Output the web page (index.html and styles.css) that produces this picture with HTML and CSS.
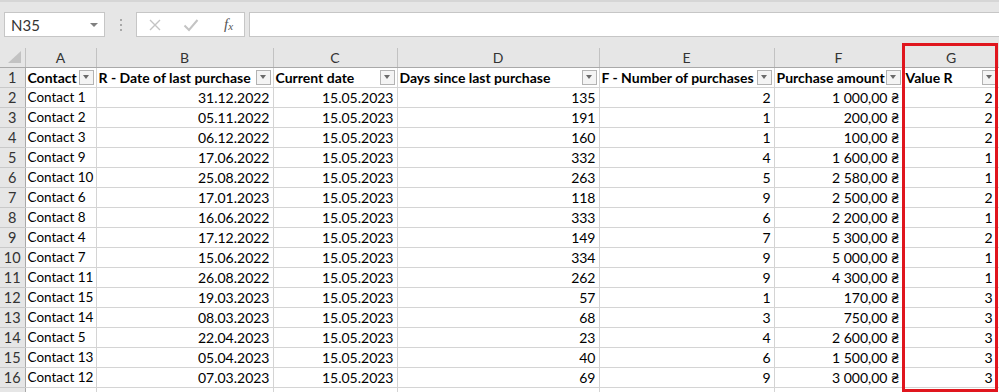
FILE: index.html
```html
<!DOCTYPE html>
<html lang="en">
<head>
    <meta charset="UTF-8">
    <title>RFM - Value R</title>
    <link rel="stylesheet" href="styles.css">
</head>
<body>
    <div class="formula-bar">
        <div class="name-box">
            <span>N35</span>
            <span class="caret"></span>
        </div>
        <div class="grip"><i></i><i></i><i></i></div>
        <div class="fx-buttons">
            <svg class="btn-icon" width="14" height="14" viewBox="0 0 14 14">
                <path d="M2 2 L12 12 M12 2 L2 12" stroke="#c4c4c4" stroke-width="1.4" fill="none"/>
            </svg>
            <svg class="btn-icon" width="16" height="14" viewBox="0 0 16 14">
                <path d="M1.5 7.5 L6 12 L14.5 2" stroke="#c4c4c4" stroke-width="2" fill="none"/>
            </svg>
            <span class="fx">f<sub>x</sub></span>
        </div>
        <div class="formula-input"></div>
    </div>

    <div class="sheet">
        <table class="grid">
            <colgroup>
                <col style="width:25px">
                <col style="width:71px">
                <col style="width:177px">
                <col style="width:124px">
                <col style="width:202px">
                <col style="width:175px">
                <col style="width:129px">
                <col style="width:96px">
            </colgroup>
            <thead>
                <tr class="col-heads">
                    <th class="corner"><span class="select-all"></span></th>
                    <th>A</th><th>B</th><th>C</th><th>D</th><th>E</th><th>F</th><th>G</th>
                </tr>
            </thead>
            <tbody id="rows">
                <tr>
                    <th class="row-head">1</th>
                    <td class="title"><div class="hdr"><span>Contact</span><i class="filter"></i></div></td>
                    <td class="title"><div class="hdr"><span>R - Date of last purchase</span><i class="filter"></i></div></td>
                    <td class="title"><div class="hdr"><span>Current date</span><i class="filter"></i></div></td>
                    <td class="title"><div class="hdr"><span>Days since last purchase</span><i class="filter"></i></div></td>
                    <td class="title"><div class="hdr"><span>F - Number of purchases</span><i class="filter"></i></div></td>
                    <td class="title"><div class="hdr"><span>Purchase amount</span><i class="filter"></i></div></td>
                    <td class="title last"><div class="hdr"><span>Value R</span><i class="filter"></i></div></td>
                </tr>
            </tbody>
        </table>
        <div class="highlight"></div>
    </div>

    <script>
        // Données du tableau : contact, date d'achat, jours, nombre, montant, valeur R
        const data = [
            ['Contact 1', '31.12.2022', 135, 2, '1 000,00', 2],
            ['Contact 2', '05.11.2022', 191, 1, '200,00', 2],
            ['Contact 3', '06.12.2022', 160, 1, '100,00', 2],
            ['Contact 9', '17.06.2022', 332, 4, '1 600,00', 1],
            ['Contact 10', '25.08.2022', 263, 5, '2 580,00', 1],
            ['Contact 6', '17.01.2023', 118, 9, '2 500,00', 2],
            ['Contact 8', '16.06.2022', 333, 6, '2 200,00', 1],
            ['Contact 4', '17.12.2022', 149, 7, '5 300,00', 2],
            ['Contact 7', '15.06.2022', 334, 9, '5 000,00', 1],
            ['Contact 11', '26.08.2022', 262, 9, '4 300,00', 1],
            ['Contact 15', '19.03.2023', 57, 1, '170,00', 3],
            ['Contact 14', '08.03.2023', 68, 3, '750,00', 3],
            ['Contact 5', '22.04.2023', 23, 4, '2 600,00', 3],
            ['Contact 13', '05.04.2023', 40, 6, '1 500,00', 3],
            ['Contact 12', '07.03.2023', 69, 9, '3 000,00', 3]
        ];

        const tbody = document.getElementById('rows');

        data.forEach((row, i) => {
            const tr = document.createElement('tr');
            tr.innerHTML = `
                <th class="row-head">${i + 2}</th>
                <td class="name">${row[0]}</td>
                <td class="num">${row[1]}</td>
                <td class="num">15.05.2023</td>
                <td class="num">${row[2]}</td>
                <td class="num">${row[3]}</td>
                <td class="num">${row[4].replace(' ', '&nbsp;')}&nbsp;₴</td>
                <td class="num last">${row[5]}</td>
            `;
            tbody.appendChild(tr);
        });

        // Ligne suivante vide, coupée en bas de l'écran
        const next = document.createElement('tr');
        next.innerHTML = '<th class="row-head"></th>' + '<td></td>'.repeat(7);
        tbody.appendChild(next);
    </script>
</body>
</html>
```

FILE: styles.css
```css
body {
    margin: 0;
    padding: 0;
    background-color: #e6e6e6;
    font-family: 'Lato', 'DejaVu Sans', sans-serif;
    color: #000;
    overflow: hidden;
}
.formula-bar {
    display: flex;
    align-items: center;
    height: 48px;
    padding-bottom: 11px;
    box-sizing: border-box;
    border-top: 2px solid #d6d6d6;
    padding-top: 10px;
}
.name-box {
    width: 101px;
    height: 25px;
    margin-left: 4px;
    box-sizing: border-box;
    background-color: white;
    border: 1px solid #c6c6c6;
    display: flex;
    align-items: center;
    justify-content: space-between;
    padding: 0 6px 0 6px;
    font-size: 15px;
    color: #333;
}
.caret {
    width: 0;
    height: 0;
    border-left: 4px solid transparent;
    border-right: 4px solid transparent;
    border-top: 4px solid #808080;
}
.grip {
    width: 31px;
    display: flex;
    flex-direction: column;
    align-items: center;
    gap: 3px;
}
.grip i {
    width: 2px;
    height: 2px;
    background-color: #a8a8a8;
}
.fx-buttons {
    width: 109px;
    height: 25px;
    box-sizing: border-box;
    background-color: white;
    border: 1px solid #c6c6c6;
    display: flex;
    align-items: center;
    padding-left: 11px;
    gap: 21px;
}
.fx {
    font-family: 'Liberation Serif', serif;
    font-style: italic;
    font-size: 15px;
    color: #555;
    margin-left: 4px;
}
.fx sub {
    font-size: 11px;
    vertical-align: -1px;
}
.formula-input {
    flex: 1;
    height: 25px;
    margin-left: 4px;
    box-sizing: border-box;
    background-color: white;
    border: 1px solid #c6c6c6;
    border-right: none;
}
.sheet {
    position: relative;
}
.grid {
    border-collapse: collapse;
    table-layout: fixed;
    width: 999px;
    background-color: white;
    font-size: 14px;
}
.grid th, .grid td {
    height: 20px;
    padding: 0 3px;
    border: 1px solid #d4d4d4;
    border-top: none;
    border-left: none;
    white-space: nowrap;
    overflow: hidden;
    box-sizing: border-box;
}
.grid td.name {
    padding-left: 2px;
    padding-right: 0;
    font-size: 13.5px;
}
.col-heads th {
    height: 19px;
    background-color: #e6e6e6;
    font-weight: normal;
    color: #333;
    font-size: 14px;
    border-right: 1px solid #c2c2c2;
    border-bottom: 1px solid #a9a9a9;
}
.select-all {
    display: block;
    margin-left: 5px;
    width: 0;
    height: 0;
    border-left: 13px solid transparent;
    border-bottom: 12px solid #c2c2c2;
}
.row-head {
    background-color: #e6e6e6;
    font-weight: normal;
    color: #333;
    font-size: 14.5px;
    text-align: center;
    border-right: 1px solid #a9a9a9 !important;
    border-bottom: 1px solid #c9c9c9 !important;
}
.grid td.num {
    text-align: right;
}
.grid td.last {
    padding-right: 6px;
}
.title {
    font-weight: bold;
    padding-left: 2px !important;
    padding-right: 2px !important;
}
.hdr {
    display: flex;
    align-items: center;
    justify-content: space-between;
}
.filter {
    width: 15px;
    height: 15px;
    flex-shrink: 0;
    box-sizing: border-box;
    border: 1px solid #b3b3b3;
    background-color: #f4f4f4;
    display: flex;
    align-items: center;
    justify-content: center;
}
.filter::after {
    content: '';
    border-left: 3.5px solid transparent;
    border-right: 3.5px solid transparent;
    border-top: 4px solid #6a6a6a;
}
.highlight {
    position: absolute;
    left: 902px;
    top: -5px;
    width: 96px;
    height: 349px;
    box-sizing: border-box;
    border: 3px solid #e0161e;
}
```
